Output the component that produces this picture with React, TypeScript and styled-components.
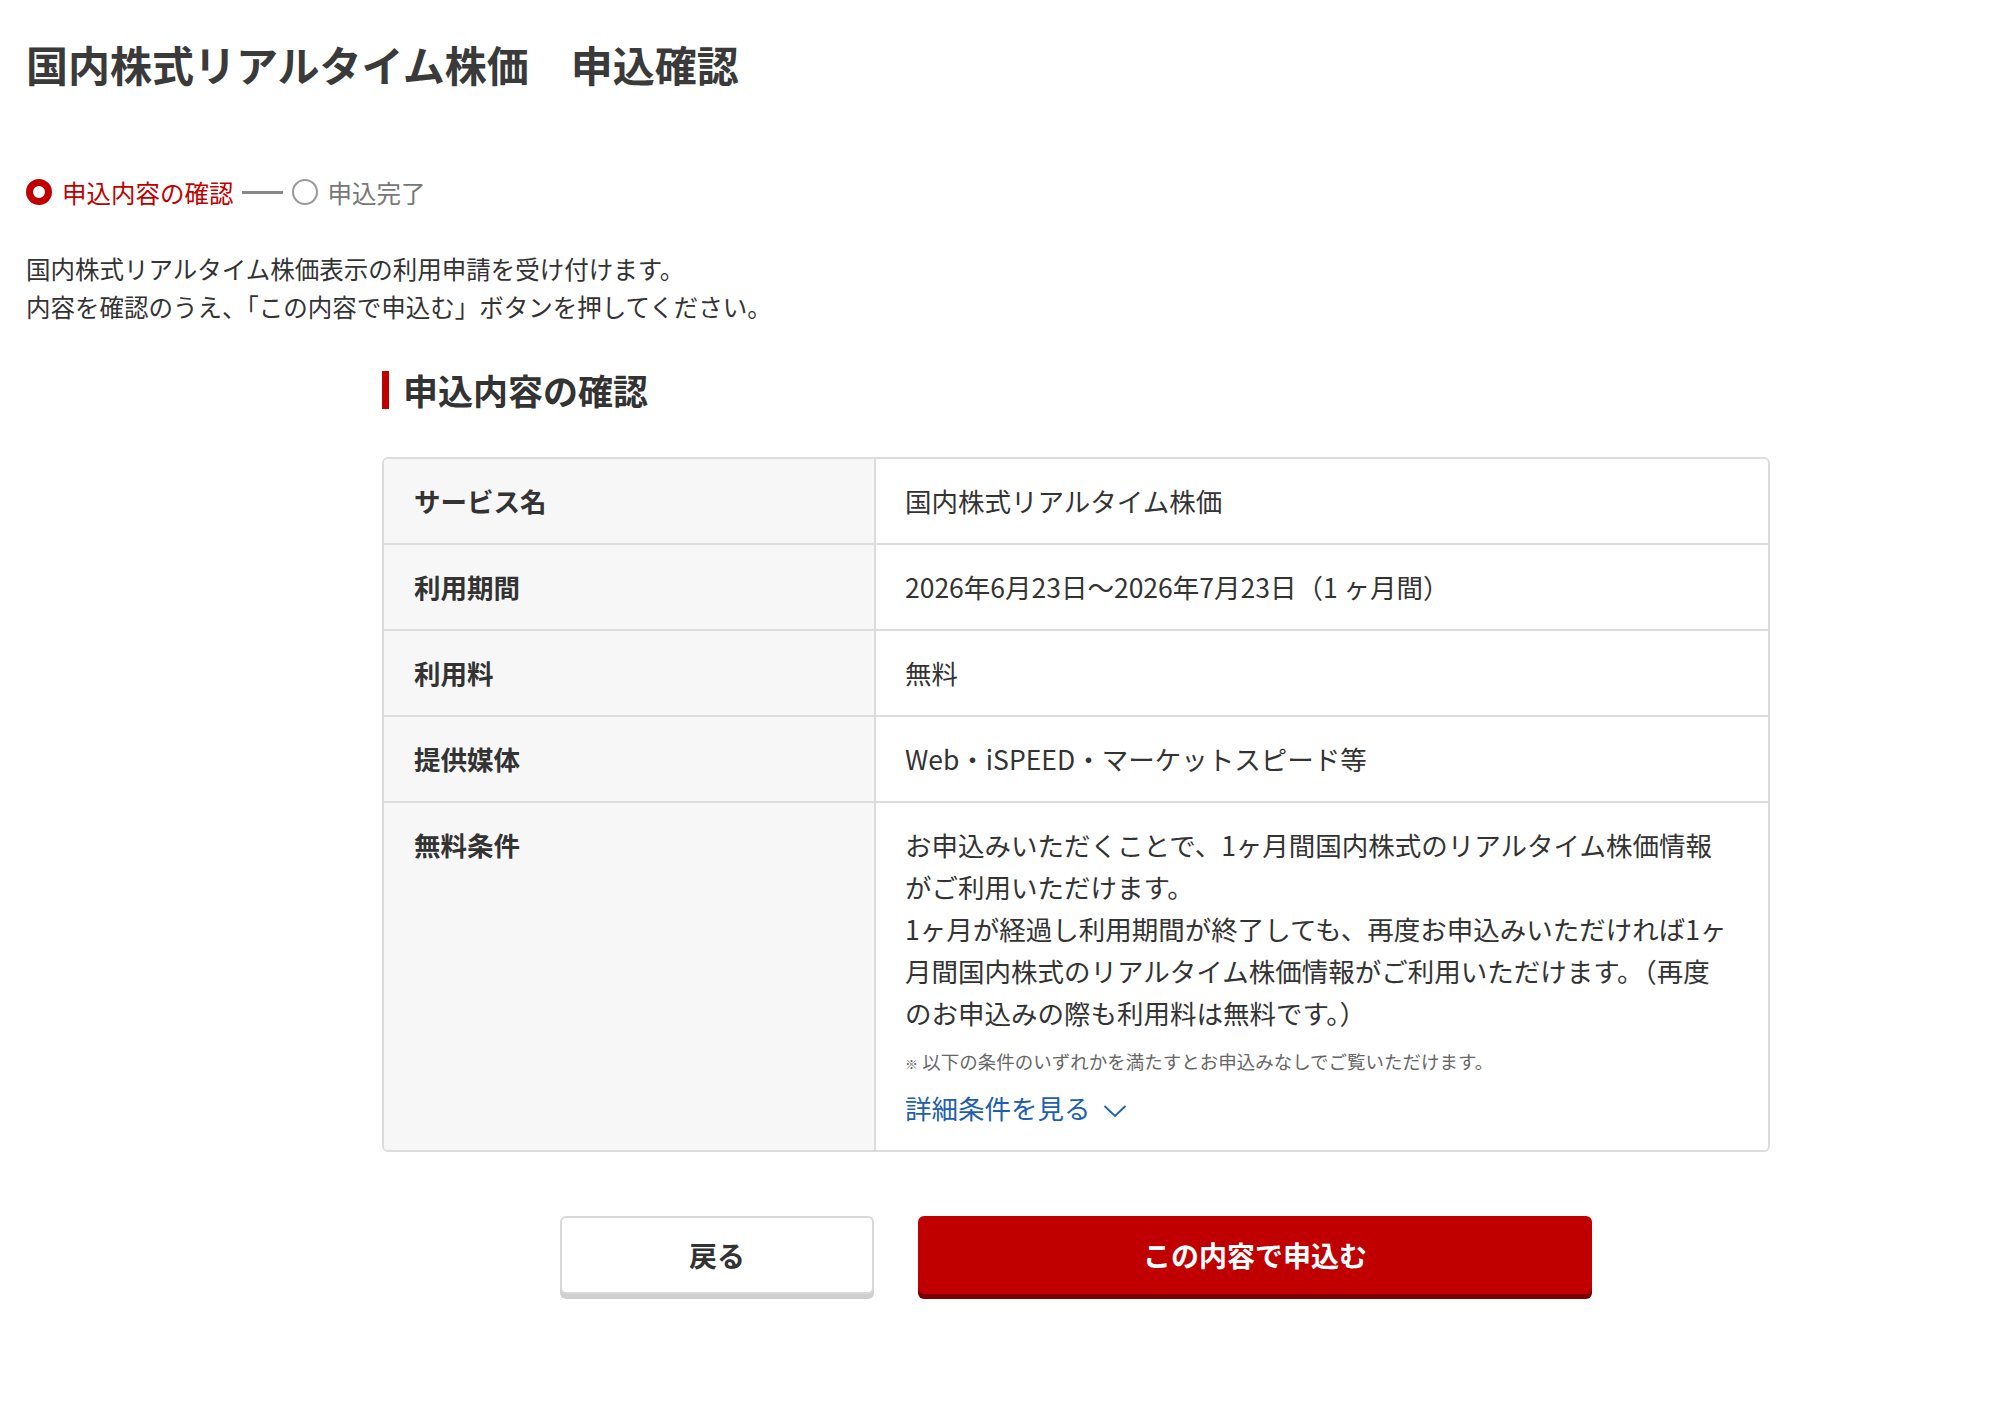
import styled, { createGlobalStyle } from "styled-components";

const GlobalStyle = createGlobalStyle`
  body {
    margin: 0;
    background: #fff;
    font-family: "Noto Sans CJK JP", "Noto Sans", sans-serif;
    color: #333;
  }
`;

type Step = { label: string; active: boolean };

const steps: Step[] = [
  { label: "申込内容の確認", active: true },
  { label: "申込完了", active: false },
];

const rows = [
  { label: "サービス名", value: "国内株式リアルタイム株価" },
  { label: "利用期間", value: "2026年6月23日〜2026年7月23日（1 ヶ月間）" },
  { label: "利用料", value: "無料" },
  { label: "提供媒体", value: "Web・iSPEED・マーケットスピード等" },
];

const App = () => {
  return (
    <Page>
      <GlobalStyle />
      <Title>国内株式リアルタイム株価　申込確認</Title>

      <Stepper>
        {steps.map((s, i) => (
          <StepItem key={s.label}>
            {i > 0 && <StepLine />}
            <StepDot $active={s.active} />
            <StepLabel $active={s.active}>{s.label}</StepLabel>
          </StepItem>
        ))}
      </Stepper>

      <Lead>
        国内株式リアルタイム株価表示の利用申請を受け付けます。
        <br />
        内容を確認のうえ、「この内容で申込む」ボタンを押してください。
      </Lead>

      <Section>
        <SectionTitle>申込内容の確認</SectionTitle>

        <Table>
          {rows.map((r) => (
            <Row key={r.label}>
              <Label>{r.label}</Label>
              <Value>{r.value}</Value>
            </Row>
          ))}
          <Row>
            <Label>無料条件</Label>
            <Value>
              お申込みいただくことで、1ヶ月間国内株式のリアルタイム株価情報がご利用いただけます。
              <br />
              1ヶ月が経過し利用期間が終了しても、再度お申込みいただければ1ヶ月間国内株式のリアルタイム株価情報がご利用いただけます。（再度のお申込みの際も利用料は無料です。）
              <Note>
                <small>※</small> 以下の条件のいずれかを満たすとお申込みなしでご覧いただけます。
              </Note>
              <MoreLink href="#">
                詳細条件を見る
                <svg width="24" height="14" viewBox="0 0 24 14" fill="none">
                  <polyline
                    points="1.5,2 12,12 22.5,2"
                    stroke="#1d5fae"
                    strokeWidth="1.8"
                  />
                </svg>
              </MoreLink>
            </Value>
          </Row>
        </Table>

        <Buttons>
          <BackButton type="button">戻る</BackButton>
          <SubmitButton type="button">この内容で申込む</SubmitButton>
        </Buttons>
      </Section>
    </Page>
  );
};

const Page = styled.div`
  padding: 34px 26px 80px;
`;

const Title = styled.h1`
  margin: 0;
  font-size: 42px;
  line-height: 60px;
  font-weight: 700;
  color: #3a3a3a;
`;

const Stepper = styled.div`
  display: flex;
  align-items: center;
  margin-top: 80px;
  height: 36px;
`;

const StepItem = styled.div`
  display: flex;
  align-items: center;
`;

const StepLine = styled.span`
  width: 41px;
  height: 3px;
  background: #888;
  margin: 0 9px 0 8px;
`;

const StepDot = styled.span<{ $active: boolean }>`
  box-sizing: border-box;
  width: 26px;
  height: 26px;
  border-radius: 50%;
  border: ${(p) => (p.$active ? "7px solid #c00000" : "2px solid #999")};
  background: #fff;
  margin-right: 10px;
`;

const StepLabel = styled.span<{ $active: boolean }>`
  font-size: 24.5px;
  color: ${(p) => (p.$active ? "#c00000" : "#777")};
`;

const Lead = styled.p`
  margin: 40px 0 0;
  font-size: 24.5px;
  line-height: 38px;
  color: #333;
`;

const Section = styled.section`
  width: 1388px;
  margin: 45px 0 0 356px;
`;

const SectionTitle = styled.h2`
  margin: 0;
  padding-left: 14px;
  border-left: 7px solid #c00000;
  font-size: 35px;
  line-height: 38px;
  font-weight: 700;
  color: #333;
`;

const Table = styled.div`
  margin-top: 48px;
  border: 2px solid #dcdcdc;
  border-radius: 6px;
  overflow: hidden;
`;

const Row = styled.div`
  display: grid;
  grid-template-columns: 492px 1fr;
  & + & {
    border-top: 2px solid #dcdcdc;
  }
`;

const Label = styled.div`
  background: #f7f7f8;
  border-right: 2px solid #dcdcdc;
  padding: 21px 30px;
  font-size: 26.5px;
  line-height: 42px;
  font-weight: 700;
  color: #333;
`;

const Value = styled.div`
  padding: 21px 34px 21px 29px;
  font-size: 26.5px;
  line-height: 42px;
  color: #333;
`;

const Note = styled.div`
  margin-top: 14px;
  font-size: 18.5px;
  line-height: 26px;
  color: #666;

  small {
    font-size: 13px;
  }
`;

const MoreLink = styled.a`
  display: inline-flex;
  align-items: center;
  gap: 12px;
  margin-top: 10px;
  color: #1d5fae;
  text-decoration: none;
  font-size: 26.5px;
  line-height: 42px;

  svg {
    margin-top: 6px;
  }
`;

const Buttons = styled.div`
  display: flex;
  justify-content: center;
  gap: 44px;
  margin-top: 64px;
`;

const BaseButton = styled.button`
  height: 78px;
  border-radius: 6px;
  font-family: inherit;
  font-size: 28px;
  font-weight: 700;
  cursor: pointer;
`;

const BackButton = styled(BaseButton)`
  width: 314px;
  background: #fff;
  color: #333;
  border: 2px solid #d8d8d8;
  box-shadow: 0 5px 0 #cfcfcf;
`;

const SubmitButton = styled(BaseButton)`
  width: 674px;
  background: #c00000;
  color: #fff;
  border: none;
  box-shadow: 0 5px 0 #7a0000;
`;

export default App;
